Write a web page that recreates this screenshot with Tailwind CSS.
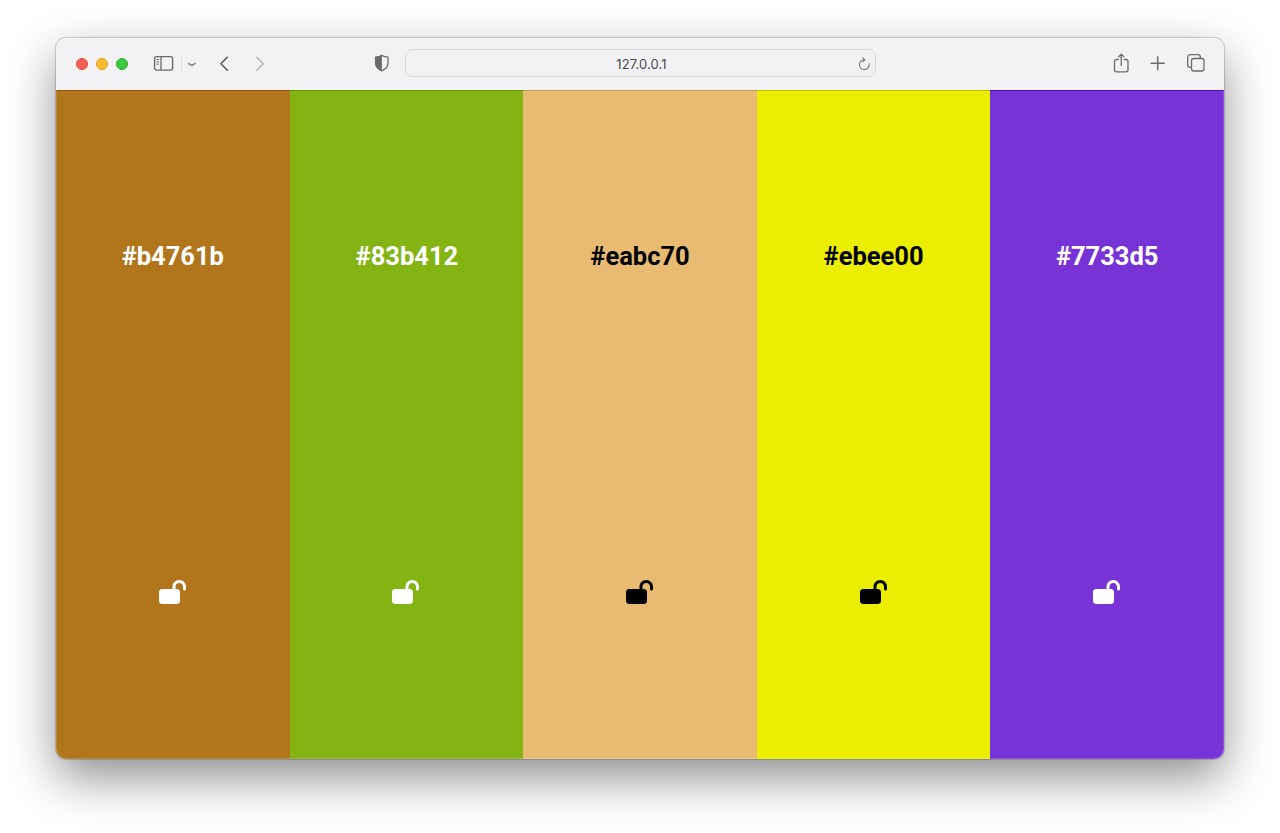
<!DOCTYPE html>
<html lang="en">
<head>
<meta charset="utf-8">
<title>Colors</title>
<script src="https://cdn.jsdelivr.net/npm/@tailwindcss/browser@4"></script>
</head>
<body class="h-[833px] overflow-hidden bg-white px-14 pt-[38px] font-['Roboto',sans-serif]">
<svg class="hidden"><symbol id="lock-open" viewBox="0 0 576 512"><path d="M352 144c0-44.2 35.8-80 80-80s80 35.800 80 80v48c0 17.700 14.300 32 32 32s32-14.300 32-32V144C576 64.500 511.500 0 432 0S288 64.500 288 144v48H64c-35.300 0-64 28.700-64 64V448c0 35.300 28.700 64 64 64H384c35.300 0 64-28.700 64-64V256c0-35.300-28.700-64-64-64H352V144z"/></symbol></svg>
<div class="relative flex h-[721px] w-[1168px] flex-col overflow-hidden rounded-[10px] shadow-[0_0_1px_1px_rgba(0,0,0,0.18),0_19px_48px_0px_rgba(0,0,0,0.44)]">
  <header class="flex h-[52px] shrink-0 items-center bg-[#f2f2f5] pb-[2px] text-[#6b6b6e]">
    <div class="mt-[2px] ml-5 flex gap-2">
      <span class="size-3 rounded-full border border-[#e2463f] bg-[#f85f57]"></span>
      <span class="size-3 rounded-full border border-[#e0a02a] bg-[#fabb2d]"></span>
      <span class="size-3 rounded-full border border-[#2fae35] bg-[#3fc840]"></span>
    </div>
    <svg class="mt-px ml-[25px] h-[17px] w-[21px]" viewBox="0 0 21 17" fill="none" stroke="currentColor"><rect x="1.600" y="1.600" width="18" height="13.500" rx="2" stroke-width="1.400"/><path d="M8 1.500v13.500" stroke-width="1.300"/><path d="M3.500 4.500h2.500M3.500 6.800h2.500M3.500 9.100h2.500" stroke-width="1"/></svg>
    <span class="mt-px ml-[7px] h-[18px] w-px bg-[#e4e4e7]"></span>
    <svg class="mt-px ml-[5px] h-2.5 w-2.5" viewBox="0 0 10 10" fill="none" stroke="#858588" stroke-width="1.500" stroke-linecap="round" stroke-linejoin="round"><path d="M1.500 4.400 4.800 6.600 8.100 4.400"/></svg>
    <svg class="ml-[22px] h-4 w-3" viewBox="0 0 12 16" fill="none" stroke="#59595c" stroke-width="1.600" stroke-linecap="round" stroke-linejoin="round"><path d="M8.300 2.200 1.900 8.800l6.400 6.400"/></svg>
    <svg class="ml-6 h-4 w-3" viewBox="0 0 12 16" fill="none" stroke="#b5b5b8" stroke-width="1.600" stroke-linecap="round" stroke-linejoin="round"><path d="M1.800 2.200 8.200 8.800l-6.400 6.400"/></svg>
    <svg class="ml-[107px] h-[18px] w-4" viewBox="0 0 16 18" fill="none"><path d="M7.800 1.200C6.200 2.300 4 3 1.600 3.200v6.300c0 3.500 2.700 5.700 6.200 7.300 3.500-1.600 6.200-3.800 6.200-7.300V3.200C11.600 3 9.400 2.300 7.800 1.200z" stroke="currentColor" stroke-width="1.300" stroke-linejoin="round"/><path d="M7.900 1.200C6.200 2.300 4 3 1.600 3.200v6.300c0 3.500 2.700 5.700 6.300 7.300z" fill="currentColor"/></svg>
    <div class="relative ml-[15px] flex h-7 w-[471px] items-center justify-center rounded-[7px] border border-[#d9d9dc] pt-[3px] pl-[2px] font-['Inter',sans-serif] text-[13px] text-[#4a4a4d]"><span class="tracking-[0.1px]">127.0.0.1</span>
      <svg class="absolute top-[7px] right-[4px] h-[15px] w-[14px]" viewBox="0 0 14 15" fill="none" stroke="#77777a" stroke-width="1.050" stroke-linecap="round" stroke-linejoin="round"><path d="M12.200 6.500A4.950 4.950 0 1 1 7.300 2.700M5.700 .8 7.900 2.800 5.900 5"/></svg>
    </div>
    <svg class="ml-[237px] h-5 w-[17px]" viewBox="0 0 17 20" fill="none" stroke="currentColor" stroke-width="1.300" stroke-linecap="round" stroke-linejoin="round"><path d="M5.300 6.500H3.500a2 2 0 0 0-2 2v8.300a2 2 0 0 0 2 2h9.500a2 2 0 0 0 2-2V8.500a2 2 0 0 0-2-2h-1.800M8.250 12.500V1.300M5.600 3.900l2.650-2.700 2.650 2.700"/></svg>
    <svg class="ml-5 h-4 w-4" viewBox="0 0 16 16" fill="none" stroke="currentColor" stroke-width="1.500" stroke-linecap="round"><path d="M7.700 1.800v13M1.200 8.300h13"/></svg>
    <svg class="ml-5 h-5 w-5" viewBox="0 0 20 20" fill="none" stroke="currentColor" stroke-width="1.300" stroke-linejoin="round"><rect x="5.500" y="5.500" width="12.500" height="12.500" rx="2.300"/><path d="M5.500 14.300H4a2.300 2.300 0 0 1-2.300-2.300V4A2.300 2.300 0 0 1 4 1.700h8A2.300 2.300 0 0 1 14.300 4v1.500"/></svg>
  </header>
  <main class="grid flex-1 grid-cols-5 text-[25.5px] leading-[30px] font-bold">
    <section class="flex flex-col items-center border-t border-[#8e510a] bg-[#b1751b] text-white"><h2 class="mt-[150px]">#b4761b</h2><svg class="mt-[309px] h-6 w-[27px] fill-current"><use href="#lock-open"/></svg></section>
    <section class="flex flex-col items-center border-t border-[#689009] bg-[#84b414] text-white"><h2 class="mt-[150px] pl-px">#83b412</h2><svg class="mt-[309px] mr-px h-6 w-[27px] fill-current"><use href="#lock-open"/></svg></section>
    <section class="flex flex-col items-center border-t border-[#c39547] bg-[#e9bb72] text-black"><h2 class="mt-[150px]">#eabc70</h2><svg class="mt-[309px] h-6 w-[27px] fill-current"><use href="#lock-open"/></svg></section>
    <section class="flex flex-col items-center border-t border-[#c1c500] bg-[#ebee00] text-black"><h2 class="mt-[150px]">#ebee00</h2><svg class="mt-[309px] h-6 w-[27px] fill-current"><use href="#lock-open"/></svg></section>
    <section class="flex flex-col items-center border-t border-[#500cae] bg-[#7733d5] text-white"><h2 class="mt-[150px]">#7733d5</h2><svg class="mt-[309px] mr-px h-6 w-[27px] fill-current"><use href="#lock-open"/></svg></section>
  </main>
  <div class="pointer-events-none absolute inset-0 rounded-[10px] border border-white/15"></div>
</div>
</body>
</html>
